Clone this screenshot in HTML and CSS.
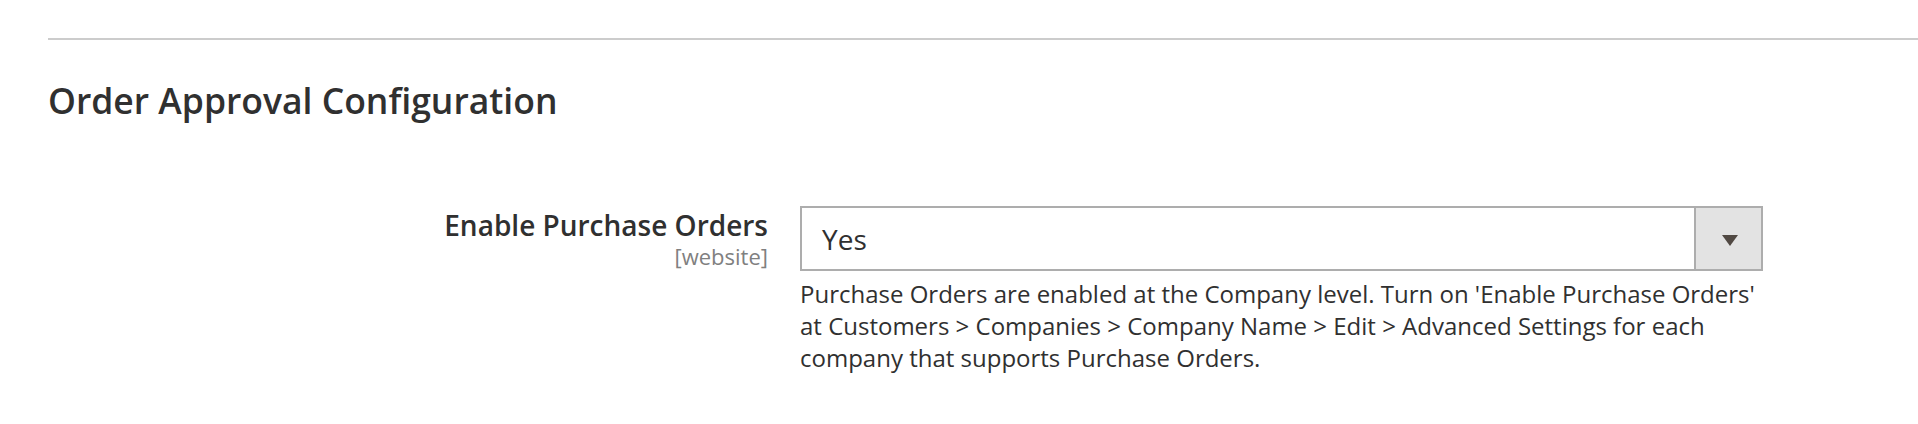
FILE: index.html
```html
<!DOCTYPE html>
<html lang="en">
<head>
<meta charset="utf-8">
<title>Order Approval Configuration</title>
<link rel="stylesheet" href="styles.css">
</head>
<body>
<div class="page">
  <section class="section">
    <h2 class="section-title">Order Approval Configuration</h2>
    <div class="field-row">
      <div class="field-label">
        <span class="label-text">Enable Purchase Orders</span>
        <span class="scope">[website]</span>
      </div>
      <div class="field-control">
        <div class="select">
          <span class="select-value">Yes</span>
          <span class="select-button">
            <svg class="arrow" width="16" height="11" viewBox="0 0 16 11"><path d="M0 0H16L8 11Z" fill="#514943"/></svg>
          </span>
        </div>
        <p class="note">Purchase Orders are enabled at the Company level. Turn on 'Enable Purchase Orders' at Customers &gt; Companies &gt; Company Name &gt; Edit &gt; Advanced Settings for each company that supports Purchase Orders.</p>
      </div>
    </div>
  </section>
</div>
</body>
</html>
```

FILE: styles.css
```css
html, body {
  margin: 0;
  padding: 0;
  background: #ffffff;
}

body {
  font-family: "Open Sans", "Liberation Sans", sans-serif;
  color: #303030;
}

.page {
  padding: 38px 0 0 48px;
}

.section {
  border-top: 2px solid #cccccc;
}

.section-title {
  margin: 40px 0 0 0;
  font-size: 35.5px;
  line-height: 40px;
  font-weight: 600;
  color: #303030;
}

.field-row {
  display: flex;
  margin-top: 86px;
}

.field-label {
  width: 720px;
  display: flex;
  flex-direction: column;
  align-items: flex-end;
  padding-top: 1px;
  margin-right: 32px;
}

.label-text {
  font-size: 28px;
  line-height: 36px;
  font-weight: 600;
  color: #303030;
}

.scope {
  font-size: 22px;
  line-height: 26px;
  color: #808080;
}

.field-control {
  width: 963px;
}

.select {
  display: flex;
  height: 65px;
  box-sizing: border-box;
  border: 2px solid #adadad;
  background: #ffffff;
}

.select-value {
  flex: 1;
  display: flex;
  align-items: center;
  padding-left: 20px;
  font-size: 28px;
  color: #303030;
}

.select-button {
  width: 65px;
  border-left: 2px solid #adadad;
  background: #e3e3e3;
  display: flex;
  align-items: center;
  justify-content: center;
}

.arrow {
  display: block;
  margin-top: 3px;
  margin-left: 2px;
}

.note {
  margin: 7px 0 0 0;
  font-size: 24px;
  line-height: 32px;
  color: #303030;
}
```
